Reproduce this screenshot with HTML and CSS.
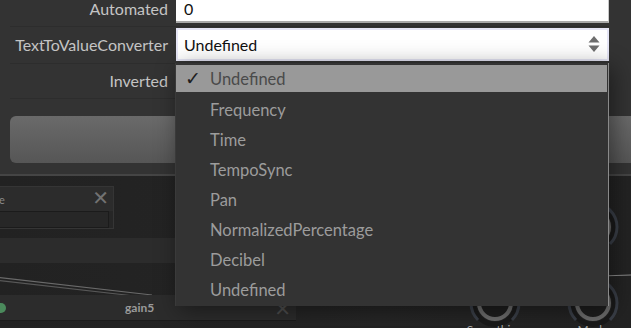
FILE: index.html
```html
<!DOCTYPE html>
<html>
<head>
<meta charset="utf-8">
<link rel="stylesheet" href="styles.css">
</head>
<body>
<div class="app">
  <section class="props">
    <div class="rows">
      <div class="row row-first">
        <div class="label">Automated</div>
        <div class="value"><div class="textbox">0</div></div>
      </div>
      <div class="row">
        <div class="label">TextToValueConverter</div>
        <div class="value">
          <div class="select">
            <span>Undefined</span>
            <svg class="arrows" width="12" height="18" viewBox="0 0 12 18"><path d="M6 1 L11.5 7.5 H0.5 Z" fill="#6e6e6e"/><path d="M6 17 L11.5 10.5 H0.5 Z" fill="#6e6e6e"/></svg>
          </div>
        </div>
      </div>
      <div class="row row-last">
        <div class="label">Inverted</div>
        <div class="value"></div>
      </div>
    </div>
    <div class="button"></div>
  </section>

  <section class="graph">
    <div class="band"></div>
    <div class="node node-e">
      <div class="node-head"><span class="node-title">e</span><span class="close">✕</span></div>
      <div class="node-body"><div class="node-field"></div></div>
    </div>
    <svg class="wire" width="631" height="150" viewBox="0 0 631 150">
      <path d="M-5 101 L152 119" stroke="#6a6a6a" stroke-width="1.2" fill="none"/>
      <path d="M-5 104 L152 122" stroke="#585858" stroke-width="1.2" fill="none"/>
      <path d="M600 100 L631 99" stroke="#8a8a8a" stroke-width="1.2" fill="none"/>
    </svg>
    <div class="node node-gain">
      <div class="node-head"><span class="dot"></span><span class="gain-title">gain5</span><span class="close">✕</span></div>
    </div>
    <div class="knob knob-a"><svg width="54" height="54" viewBox="0 0 54 54"><circle cx="27" cy="27" r="24" fill="#1a1a1a"/><path d="M10 44 A24 24 0 1 1 44 44" stroke="#3a3f48" stroke-width="3" fill="none"/><circle cx="27" cy="27" r="19" fill="#222"/><circle cx="27" cy="27" r="16" stroke="#6c6c6c" stroke-width="4" fill="#1e1e1e"/></svg><span class="knob-label">Smoothing</span></div>
    <div class="knob knob-b"><svg width="54" height="54" viewBox="0 0 54 54"><circle cx="27" cy="27" r="24" fill="#1a1a1a"/><path d="M10 44 A24 24 0 1 1 44 44" stroke="#3a3f48" stroke-width="3" fill="none"/><circle cx="27" cy="27" r="19" fill="#222"/><circle cx="27" cy="27" r="16" stroke="#6c6c6c" stroke-width="4" fill="#1e1e1e"/></svg><span class="knob-label">Mode</span></div>
    <div class="knob knob-c"><svg width="54" height="54" viewBox="0 0 54 54"><circle cx="27" cy="27" r="24" fill="#1a1a1a"/><path d="M10 44 A24 24 0 1 1 44 44" stroke="#3a3f48" stroke-width="3" fill="none"/><circle cx="27" cy="27" r="19" fill="#222"/><circle cx="27" cy="27" r="16" stroke="#6c6c6c" stroke-width="4" fill="#1e1e1e"/></svg></div>
  </section>

  <ul class="dropdown">
    <li class="item active"><span class="check">✓</span>Undefined</li>
    <li class="item">Frequency</li>
    <li class="item">Time</li>
    <li class="item">TempoSync</li>
    <li class="item">Pan</li>
    <li class="item">NormalizedPercentage</li>
    <li class="item">Decibel</li>
    <li class="item">Undefined</li>
  </ul>
</div>
</body>
</html>
```
FILE: styles.css
```css
html, body {
  margin: 0;
  padding: 0;
  background: #232323;
}
body {
  width: 631px;
  height: 328px;
  overflow: hidden;
  font-family: Lato, "Open Sans", sans-serif;
}
.app {
  position: relative;
  width: 631px;
  height: 328px;
  overflow: hidden;
}
.props {
  background: #333;
  height: 176px;
  border-bottom: 2px solid #454545;
  padding-left: 10px;
  box-sizing: border-box;
  display: flex;
  flex-direction: column;
}
.rows {
  padding-right: 22px;
  margin-top: -8px;
}
.row {
  display: grid;
  grid-template-columns: 158px 1fr;
  column-gap: 8px;
  align-items: center;
  height: 36px;
  border-bottom: 1px solid #2d2d2d;
}
.row-first { height: 34px; }
.row-last { height: 34px; }
.label {
  text-align: right;
  color: #c4c4c4;
  font-size: 16px;
  white-space: nowrap;
  margin-top: -2px;
}
.row-first .label { margin-top: -2px; }
.value { height: 100%; display: flex; align-items: center; }
.textbox {
  box-sizing: border-box;
  width: 100%;
  height: 31px;
  margin-top: -3px;
  background: #fff;
  border-bottom: 2px solid #a9a9a9;
  border-right: 1px solid #c8c8c8;
  color: #111;
  font-size: 16px;
  padding: 7px 0 0 8px;
}
.select {
  box-sizing: border-box;
  width: 100%;
  height: 33px;
  margin-top: -2px;
  background: #fff;
  border: 2px solid #e6e6f6;
  color: #111;
  font-size: 16px;
  display: flex;
  align-items: center;
  justify-content: space-between;
  padding: 0 7px 0 6px;
}
.arrows { display: block; }
.button {
  margin-top: 17px;
  height: 47px;
  margin-right: -12px;
  border-radius: 6px;
  background: linear-gradient(#6a6a6a, #565656);
}
.graph {
  position: relative;
  height: 150px;
  background: linear-gradient(90deg, #222 0, #242424 40%, #262626 60%, #232323 100%);
}
.band {
  position: absolute;
  left: 0;
  top: 62px;
  width: 180px;
  height: 25px;
  background: #2c2c2c;
}
.node {
  position: absolute;
  box-sizing: border-box;
}
.node-e {
  left: -20px;
  top: 10px;
  width: 134px;
  height: 43px;
  background: #262626;
  border: 1px solid #353535;
}
.node-head {
  display: flex;
  align-items: center;
  height: 24px;
  background: #2c2c2c;
  position: relative;
}
.node-title {
  color: #8a8a8a;
  font-size: 11px;
  margin-left: 18px;
}
.close {
  position: absolute;
  right: 4px;
  top: -1px;
  color: #727272;
  font-size: 20px;
  line-height: 24px;
  font-family: "DejaVu Sans", sans-serif;
  font-weight: bold;
}
.node-body { padding: 0 4px; }
.node-field {
  height: 15px;
  border: 1px solid #1b1b1b;
  background: #272727;
}
.wire {
  position: absolute;
  left: 0;
  top: 0;
}
.node-gain {
  left: -20px;
  top: 119px;
  width: 316px;
  height: 26px;
  background: #2b2b2b;
  border-bottom: 1px solid #1c1c1c;
}
.node-gain .node-head { height: 25px; background: #2c2c2c; }
.dot {
  width: 10px;
  height: 10px;
  border-radius: 50%;
  background: #4b8a5c;
  margin-left: 16px;
}
.gain-title {
  margin-left: 119px;
  color: #9a9a9a;
  font-size: 12px;
  font-weight: bold;
}
.node-gain .close { right: 5px; top: 2px; color: #4e4e4e; }
.knob {
  position: absolute;
  width: 54px;
  height: 54px;
}
.knob svg { display: block; }
.knob-a { left: 468px; top: 100px; }
.knob-b { left: 566px; top: 100px; }
.knob-c { left: 566px; top: 24px; }
.knob-label {
  position: absolute;
  top: 46px;
  left: -10px;
  width: 74px;
  text-align: center;
  color: #aaa;
  font-size: 12px;
}
.dropdown {
  position: absolute;
  left: 175px;
  top: 63px;
  width: 434px;
  height: 243px;
  margin: 0;
  padding: 2px 0 0 0;
  box-sizing: border-box;
  list-style: none;
  background: #333;
  border-left: 1px solid #3a3a3a;
  border-right: 1px solid #8a8a8a;
  box-shadow: 4px 4px 22px rgba(0,0,0,0.45);
}
.item {
  height: 30px;
  line-height: 30px;
  padding-left: 34px;
  color: #9c9c9c;
  font-size: 16.5px;
  position: relative;
}
.item.active {
  height: 27px;
  line-height: 29px;
  margin: 0 1px 3px 0;
  background: #999;
  color: #4a4a4a;
}
.check {
  position: absolute;
  left: 9px;
  top: -1px;
  color: #1e1e1e;
  font-size: 19px;
  font-weight: bold;
  font-family: "DejaVu Sans", sans-serif;
}
```
